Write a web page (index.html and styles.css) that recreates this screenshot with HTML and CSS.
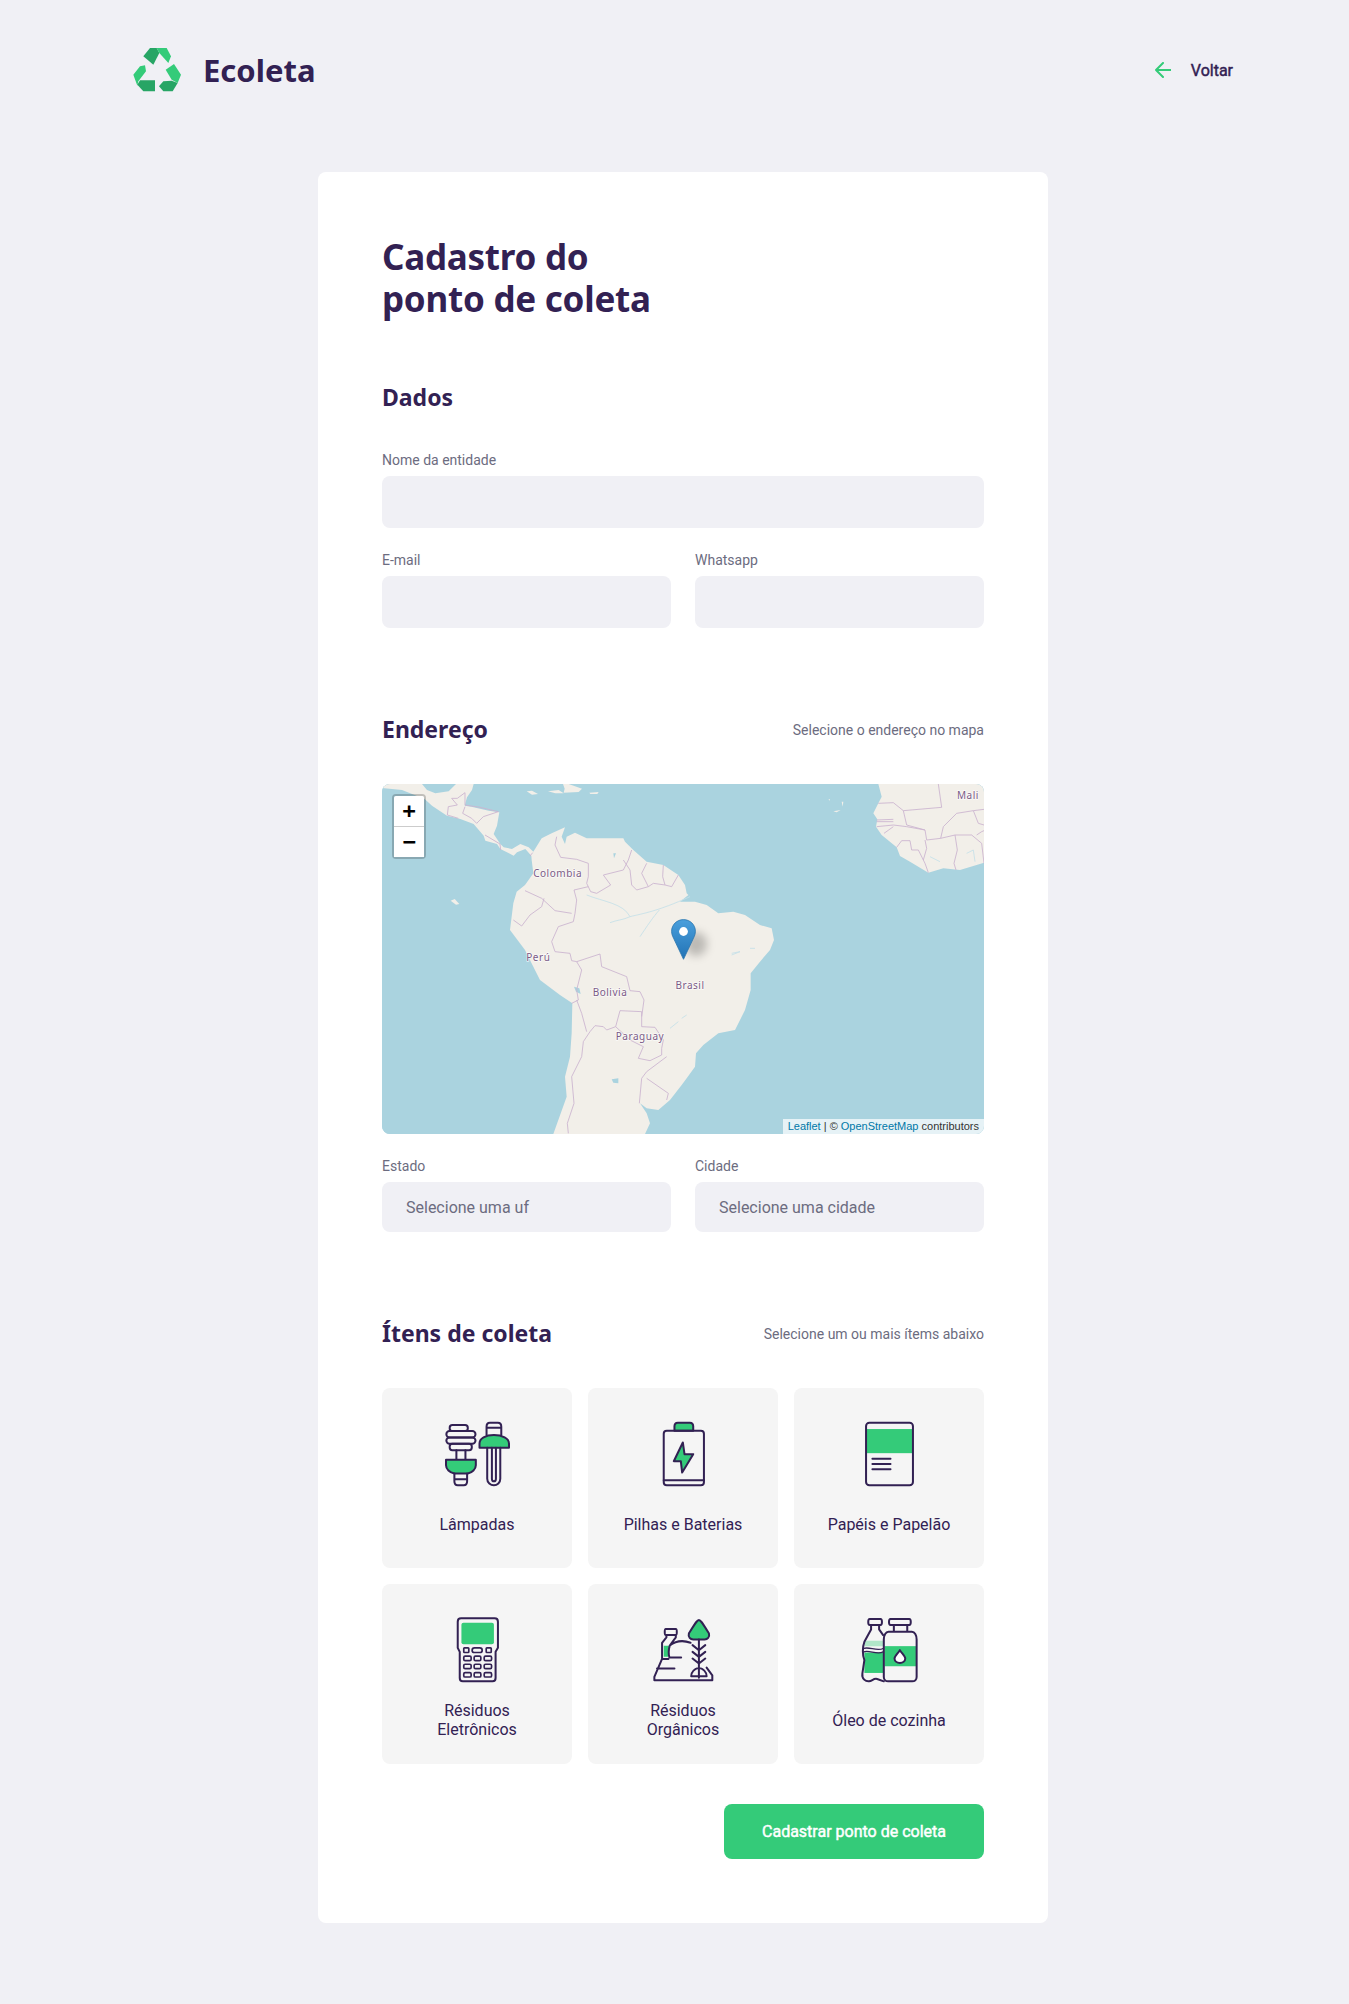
FILE: index.html
```html
<!DOCTYPE html>
<html lang="pt-BR">
<head>
<meta charset="utf-8">
<title>Ecoleta</title>
<link rel="stylesheet" href="styles.css">
</head>
<body>
<div class="page">
  <header class="top">
    <a class="brand" href="#">
      <svg class="logo" viewBox="9 22 150 138" width="50" height="46">
        <polygon class="g-dark" points="40,50 60,25 80,25 88,40 70,75"/>
        <polygon class="g-light" points="80,25 110,25 123,50 115,70 88,40"/>
        <polygon class="g-light" points="107,90 132,73 153,105 143,130 125,120"/>
        <polygon class="g-dark" points="87,140 100,125 125,123 143,130 128,155 100,155"/>
        <polygon class="g-light" points="10,105 30,80 45,77 48,95 25,125 22,138"/>
        <polygon class="g-dark" points="30,122 75,122 75,155 40,155 22,135"/>
      </svg>
      <span class="brand-name">Ecoleta</span>
    </a>
    <a class="back" href="#">
      <svg class="back-icon" viewBox="0 0 16 16" width="16" height="16"><path d="M15.5 8H1M8 1L1 8l7 7"/></svg>
      <span>Voltar</span>
    </a>
  </header>

  <form class="form">
    <h1 class="title">Cadastro do<br>ponto de coleta</h1>

    <fieldset class="section">
      <legend class="legend"><h2>Dados</h2></legend>
      <div class="field">
        <label>Nome da entidade</label>
        <input class="input" type="text">
      </div>
      <div class="row">
        <div class="field"><label>E-mail</label><input class="input" type="text"></div>
        <div class="field"><label>Whatsapp</label><input class="input" type="text"></div>
      </div>
    </fieldset>

    <fieldset class="section">
      <legend class="legend"><h2>Endereço</h2><span>Selecione o endereço no mapa</span></legend>
      <div class="map">
        <svg class="map-art" viewBox="0 0 1806 1050" width="602" height="350">
          <rect class="water" width="1806" height="1050"/>
          <path class="land" d="M0,0 L120,0 135,18 160,28 200,22 222,0 275,0 270,18 255,40 248,65 268,68 320,80 352,85 345,125 335,150 355,180 365,190 390,195 415,180 440,190 454,203 479,163 509,148 549,130 539,158 549,180 554,158 579,146 614,163 664,163 724,163 729,173 754,198 794,233 844,243 889,273 909,303 914,328 919,333 894,353 939,353 974,363 1009,388 1054,383 1089,393 1134,423 1169,433 1176,468 1164,498 1134,533 1106,568 1106,618 1089,678 1059,738 1009,748 964,783 942,808 939,848 914,883 899,903 864,948 829,978 794,973 774,958 794,988 804,1018 789,1050 514,1050 554,938 549,878 564,818 569,748 571,658 534,633 474,588 454,548 429,498 384,438 394,358 404,323 429,303 454,268 449,228 448,215 430,195 405,205 395,215 355,195 345,180 310,170 305,155 275,120 235,105 195,95 150,65 128,45 60,18 0,12Z"/>
          <path class="land" d="M434,22 L450,20 468,30 450,32Z M498,22 L530,18 545,28 520,28Z M543,0 L560,0 600,14 590,24 545,26 548,14Z M622,26 L650,24 646,30 625,30Z"/>
          <path class="islands" d="M206,350 L218,345 232,360 222,362Z"/>
          <g transform="translate(-36,-42)">
            <path class="river" d="M650,375 C700,395 760,400 780,440 C820,430 860,425 960,380 M810,500 C830,470 850,440 868,420 M720,458 C740,450 760,450 780,440 M1085,555 L1110,545 M900,775 L925,755 M935,745 L950,735"/>
            <path class="lake" d="M612,650 L628,655 632,672 618,665Z M725,928 L745,925 745,940 730,938Z M730,250 L738,250 732,265Z"/>
            <path class="border" d="M285,68 L262,85 245,85 262,105 235,110 232,135 265,145 M285,68 L285,105 330,112 385,125 M285,110 L278,130 305,145 M305,145 L320,160 M320,160 L340,140 385,125 M345,195 L390,222 392,240 M480,258 L488,248 M560,200 L555,225 572,262 620,268 655,280 655,320 650,340 662,365 680,370 722,345 700,315 760,300 775,270 785,240 M760,270 L780,300 785,345 800,360 835,350 815,310 830,280 M835,350 L850,340 885,345 878,320 880,285 M885,345 L905,350 925,315 M655,350 L612,360 620,390 615,430 610,455 565,470 545,515 555,545 600,550 605,572 620,575 690,552 695,590 770,620 780,662 810,665 822,690 815,740 815,725 750,722 737,770 M465,362 L515,385 555,422 605,430 M522,385 L515,410 480,435 455,468 430,450 M620,575 L635,600 620,660 625,690 605,700 M620,690 L635,730 650,785 M660,785 L675,767 700,770 710,780 737,770 780,810 820,830 805,865 840,872 875,855 875,835 880,810 855,772 815,770 815,740 M890,860 L830,905 815,925 808,1000 M830,925 L895,970 890,990 M660,785 L640,815 635,860 605,920 612,1000 592,1060 595,1090"/>
            <text class="map-label" x="563" y="322">Colombia</text>
            <text class="map-label" x="505" y="572">Perú</text>
            <text class="map-label" x="720" y="678">Bolivia</text>
            <text class="map-label" x="810" y="810">Paraguay</text>
            <text class="map-label" x="960" y="658">Brasil</text>
          </g>
          <g transform="translate(894,-42)">
            <path class="land" d="M595,42 L605,80 595,100 580,130 592,148 588,170 605,195 650,232 660,258 690,275 745,308 790,295 840,300 912,278 912,42Z"/>
            <path class="islands" d="M445,88 L450,88 450,92Z M485,95 L490,95 488,110Z M460,124 L482,120 470,127Z"/>
            <path class="river" d="M860,250 L880,240 885,275 M750,260 L780,275 M155,550 L180,545 M210,535 L225,535"/>
            <path class="border" d="M775,42 L785,112 670,122 640,98 595,100 M670,122 L680,165 735,180 740,210 782,205 825,195 875,195 M782,205 L790,170 830,130 880,122 912,118 M590,150 L640,148 M590,155 L640,155 M590,170 L640,165 680,170 735,180 M612,190 L640,170 M650,232 L665,212 690,212 695,240 715,240 735,280 745,308 M735,210 L740,235 730,270 M825,195 L832,240 822,280 828,300 M875,195 L905,220 912,280 M890,195 L905,185 912,182 M880,122 L895,160 912,165"/>
            <text class="map-label" x="864" y="86">Mali</text>
          </g>
        </svg>
        <div class="zoom">
          <a class="zoom-btn zoom-in" href="#">+</a>
          <a class="zoom-btn" href="#">−</a>
        </div>
        <svg class="pin-shadow" viewBox="0 0 41 41" width="41" height="41"><ellipse class="shadow-shape" cx="14" cy="25" rx="11" ry="12"/></svg>
        <svg class="pin" viewBox="0 0 25 41" width="25" height="41">
          <defs><linearGradient id="pinfill" x1="0" y1="0" x2="0" y2="1"><stop offset="0" stop-color="#4a9fdc"/><stop offset="1" stop-color="#2273b5"/></linearGradient></defs>
          <path fill="url(#pinfill)" stroke="#2a75ad" stroke-width=".8" d="M12.5 .6C5.8 .6 .6 5.8 .6 12.3c0 2.4 .8 4.7 1.9 6.8L12.5 40.3 22.5 19.1c1.1-2.1 1.9-4.4 1.9-6.8C24.4 5.8 19.2 .6 12.5 .6Z"/>
          <circle cx="12.5" cy="12.5" r="4.4" fill="#fff"/>
        </svg>
        <div class="attr"><a href="#">Leaflet</a> | © <a href="#">OpenStreetMap</a> contributors</div>
      </div>
      <div class="row">
        <div class="field"><label>Estado</label><div class="select">Selecione uma uf</div></div>
        <div class="field"><label>Cidade</label><div class="select">Selecione uma cidade</div></div>
      </div>
    </fieldset>

    <fieldset class="section">
      <legend class="legend"><h2>Ítens de coleta</h2><span>Selecione um ou mais ítems abaixo</span></legend>
      <ul class="items">
        <li class="item">
          <svg class="icon" viewBox="191 105 200 200">
            <rect class="st" x="208" y="120" width="54" height="18" rx="8"/>
            <rect class="st" x="198" y="138" width="87" height="19" rx="9.5"/>
            <rect class="st" x="198" y="157" width="87" height="19" rx="9.5"/>
            <rect class="st" x="208" y="176" width="66" height="19" rx="8"/>
            <path class="st" d="M228 195V224M255 195V224"/>
            <path class="stg" d="M197 224H286V240C286 252 275 262 262 265H222C208 262 197 252 197 240Z"/>
            <path class="st" d="M222 265V288C222 296 227 300 232 300H250C256 300 260 296 260 288V265M222 282H260"/>
            <path class="st" d="M318 150V125C318 117 323 113 328 113H352C358 113 362 117 362 125V150M318 128H362"/>
            <path class="stg" d="M297 188V175C297 160 315 150 340 150C365 150 385 160 385 175V188Z"/>
            <path class="st" d="M320 188V280C320 292 330 300 340 300C350 300 359 292 359 280V188M334 188V280C334 286 336 288 340 288C344 288 346 286 346 280V188"/>
          </svg>
          <span class="item-name">Lâmpadas</span>
        </li>
        <li class="item">
          <svg class="icon" viewBox="-91 105 200 200">
            <path class="stg" d="M-18 137V124C-18 117 -14 113 -8 113H28C34 113 38 117 38 124V137Z"/>
            <rect class="st" x="-50" y="137" width="120" height="163" rx="9"/>
            <path class="st" d="M-50 285H70"/>
            <path class="stg" d="M7 172L-20 228H1L5 262L38 207H12Z"/>
          </svg>
          <span class="item-name">Pilhas e Baterias</span>
        </li>
        <li class="item">
          <svg class="icon" viewBox="527 105 200 200">
            <rect class="gr" x="558" y="132" width="138" height="72"/>
            <rect class="st" x="557" y="113" width="140" height="187" rx="10"/>
            <path class="st" d="M576 221H630M576 236H630M576 252H630"/>
          </svg>
          <span class="item-name">Papéis e Papelão</span>
        </li>
        <li class="item">
          <svg class="icon" viewBox="191 108 200 200">
            <path class="st" d="M242 115H342C348 115 352 119 352 125V203L345 215V293C345 299 341 303 336 303H247C242 303 238 299 238 293V215L232 203V125C232 119 236 115 242 115Z"/>
            <rect class="gr" x="243" y="128" width="97" height="64" rx="6"/>
            <g class="keys">
              <rect x="250" y="203" width="15" height="14" rx="2"/><rect x="275" y="203" width="30" height="14" rx="7"/><rect x="317" y="203" width="15" height="14" rx="2"/>
              <rect x="250" y="228" width="22" height="13" rx="4"/><rect x="281" y="228" width="20" height="13" rx="4"/><rect x="311" y="228" width="22" height="13" rx="4"/>
              <rect x="250" y="252" width="22" height="13" rx="4"/><rect x="281" y="252" width="20" height="13" rx="4"/><rect x="311" y="252" width="22" height="13" rx="4"/>
              <rect x="250" y="277" width="22" height="13" rx="4"/><rect x="281" y="277" width="20" height="13" rx="4"/><rect x="311" y="277" width="22" height="13" rx="4"/>
            </g>
          </svg>
          <span class="item-name">Résiduos<br>Eletrônicos</span>
        </li>
        <li class="item">
          <svg class="icon" viewBox="-91 108 200 200">
            <path class="gr" d="M-50 197H-33L-37 230H-50Z"/>
            <path class="st" d="M-44 147H-14C-10 147 -10 165 -14 165H-44C-48 165 -48 147 -44 147ZM-42 165V172L-55 188V236L-78 290V300H95V285L78 262M-14 165V172L-32 196C-22 188 -8 183 5 183C15 183 22 185 30 188M-32 196C-36 210 -36 222 -33 232H2M-55 236H-36M-70 265H-18"/>
            <path class="stg" d="M55 120C50 120 47 125 25 160C22 172 30 178 38 178H72C80 178 88 172 85 160C63 125 60 120 55 120Z"/>
            <path class="st" d="M55 178V292M36 195L55 210L74 195M36 215L55 230L74 215M36 235L55 250L74 235M32 288C32 270 45 265 55 262C65 265 78 270 78 288Z"/>
          </svg>
          <span class="item-name">Résiduos<br>Orgânicos</span>
        </li>
        <li class="item">
          <svg class="icon" viewBox="527 108 200 200">
            <path class="gr-soft" d="M555 182H608V198H552Z"/>
            <path class="gr" d="M552 217H608V278H552Z"/>
            <rect class="gr" x="612" y="198" width="94" height="60"/>
            <path class="st" d="M568 117H600C606 117 606 135 600 135H568C562 135 562 117 568 117ZM572 135V148L552 185C546 200 546 225 552 240L546 280C544 296 556 304 566 303C575 302 580 293 590 296L610 303M596 135V148L608 165"/>
            <path class="st wave" d="M550 205C565 198 590 215 608 205M550 215C565 208 590 225 608 215"/>
            <path class="st" d="M630 117H686C692 117 692 135 686 135H630C624 135 624 117 630 117ZM640 135V155M680 135V155M624 155H694C702 155 708 165 708 178V290C708 298 702 303 695 303H623C616 303 610 298 610 290V178C610 165 616 155 624 155Z"/>
            <path class="st drop" d="M658 210C652 220 642 228 642 235C642 243 650 248 658 248C666 248 674 243 674 235C674 228 664 220 658 210Z"/>
          </svg>
          <span class="item-name">Óleo de cozinha</span>
        </li>
      </ul>
    </fieldset>

    <div class="actions"><button class="submit" type="button">Cadastrar ponto de coleta</button></div>
  </form>
</div>
</body>
</html>
```

FILE: styles.css
```css
* { box-sizing: border-box; margin: 0; padding: 0; }
html, body { background: #f0f0f5; }
body { font-family: Roboto, Arial, sans-serif; color: #6c6c80; }
a { text-decoration: none; }

.page { margin-left: 17px; display: flex; flex-direction: column; align-items: center; }

.top { width: 1100px; margin-top: 47px; height: 46px; display: flex; align-items: center; justify-content: space-between; }
.brand { display: flex; align-items: center; gap: 20px; }
.logo { display: block; }
.g-dark { fill: #27a565; }
.g-light { fill: #34cb79; }
.brand-name { font-family: "Noto Sans", sans-serif; font-weight: 700; font-size: 31px; line-height: 36px; color: #322153; }
.back { display: flex; align-items: center; gap: 20px; color: #322153; font-weight: 400; font-size: 16px; -webkit-text-stroke: .45px #322153; }
.back-icon { display: block; fill: none; stroke: #34cb79; stroke-width: 2; stroke-linecap: round; stroke-linejoin: round; }

.form { width: 730px; margin: 79px 0 81px; padding: 64px; background: #fff; border-radius: 8px; }
.title { font-family: "Noto Sans", sans-serif; font-weight: 700; font-size: 35px; line-height: 42px; letter-spacing: -.25px; color: #322153; }

.section { border: 0; margin-top: 64px; min-width: 0; }
.legend { display: flex; width: 100%; height: 28px; justify-content: space-between; align-items: center; margin-bottom: 40px; font-size: 14px; color: #6c6c80; }
.legend h2 { font-family: "Noto Sans", sans-serif; font-weight: 700; font-size: 23px; line-height: 26px; margin-bottom: 2px; color: #322153; }

.field { display: flex; flex: 1; flex-direction: column; margin-bottom: 24px; min-width: 0; }
.field label { font-size: 14px; line-height: 16px; margin-bottom: 8px; color: #6c6c80; }
.input { height: 52px; border: 0; background: #f0f0f5; border-radius: 8px; width: 100%; }
.select { height: 50px; background: #f0f0f5; border-radius: 8px; padding: 1px 24px 0; font-size: 16px; line-height: 50px; color: #6c6c80; }
.row { display: flex; gap: 24px; }

.map { position: relative; width: 602px; height: 350px; overflow: hidden; border-radius: 8px; margin-bottom: 24px; background: #aad3df; }
.map-art { display: block; }
.water { fill: #aad3df; }
.land { fill: #f2efe9; }
.islands { fill: #f2efe9; }
.river { fill: none; stroke: #c4e0e8; stroke-width: 2.5; }
.lake { fill: #aad3df; }
.border { fill: none; stroke: #cbb4cf; stroke-width: 2.6; stroke-linejoin: round; }
.map-label { font-family: "Noto Sans", sans-serif; font-size: 30px; letter-spacing: 1.6px; text-anchor: middle; fill: #7a5a86; stroke: #fff; stroke-width: 4px; stroke-opacity: .75; paint-order: stroke; }

.zoom { position: absolute; left: 10px; top: 10px; border: 2px solid rgba(0, 0, 0, .2); border-radius: 4px; background-clip: padding-box; width: 34px; }
.zoom-btn { display: block; height: 30px; width: 30px; background: #fff; color: #000; text-align: center; line-height: 30px; font: 700 22px/30px "DejaVu Sans Mono", monospace; }
.zoom-in { border-bottom: 1px solid #ccc; height: 31px; border-radius: 2px 2px 0 0; }

.pin { position: absolute; left: 289px; top: 135px; display: block; }
.pin-shadow { position: absolute; left: 300px; top: 135px; overflow: visible; display: block; }
.shadow-shape { fill: rgba(0, 0, 0, .22); filter: blur(4px); }

.attr { position: absolute; right: 0; bottom: 0; height: 15.4px; padding: 0 5px; background: rgba(255, 255, 255, .7); font-family: "Liberation Sans", Arial, sans-serif; font-size: 11px; line-height: 15.4px; color: #333; }
.attr a { color: #0078a8; }

.items { list-style: none; display: grid; grid-template-columns: repeat(3, 190px); grid-auto-rows: 180px; gap: 16px; }
.item { background: #f5f5f5; border-radius: 8px; padding: 32px 16px 16px; display: flex; flex-direction: column; align-items: center; text-align: center; color: #322153; font-size: 16px; }
.icon { display: block; width: 67px; height: 67px; flex: none; }
.item-name { flex: 1; display: flex; align-items: center; justify-content: center; margin-top: 9px; line-height: 19px; }
.st { fill: none; stroke: #322153; stroke-width: 6; stroke-linejoin: round; stroke-linecap: round; }
.stg { fill: #34cb79; stroke: #322153; stroke-width: 6; stroke-linejoin: round; }
.gr { fill: #34cb79; }
.gr-soft { fill: #34cb79; opacity: .35; }
.wave { stroke-width: 4; }
.drop { fill: #fff; }
.keys rect { fill: none; stroke: #322153; stroke-width: 5; }

.actions { display: flex; justify-content: flex-end; margin-top: 40px; }
.submit { width: 260px; height: 55px; border: 0; border-radius: 8px; background: #34cb79; color: #fff; font-family: Roboto, Arial, sans-serif; font-weight: 400; font-size: 16px; -webkit-text-stroke: .45px #fff; }
```
